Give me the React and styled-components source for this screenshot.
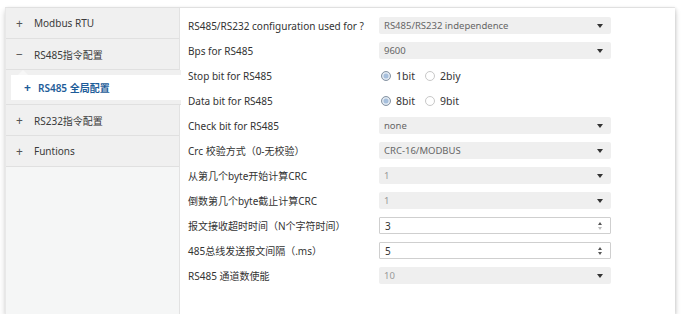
import React from "react"
import styled, { createGlobalStyle } from "styled-components"

const GlobalStyle = createGlobalStyle`
  html, body {
    margin: 0;
    padding: 0;
    background: #ffffff;
  }
  body {
    font-family: "Noto Sans", "Noto Sans CJK SC", sans-serif;
  }
`

const Card = styled.div`
  margin: 8px 0 0 5px;
  width: 670px;
  height: 306px;
  display: flex;
  background: #fff;
  box-sizing: border-box;
  box-shadow: 0 3px 6px rgba(0, 0, 0, 0.18), 0 -1px 0 #e6e6e6, 1px 0 3px rgba(0, 0, 0, 0.1);
`

const Sidebar = styled.div`
  width: 175px;
  flex: none;
  background: #f5f6f6;
  border-right: 1px solid #e2e2e2;
  border-left: 1px solid #e8e8e8;
  box-sizing: border-box;
  display: flex;
  flex-direction: column;
`

const NavItem = styled.div`
  height: 31px;
  display: flex;
  align-items: center;
  padding-left: 10px;
  background: #f0f0f0;
  border-bottom: 1px solid #e0e0e0;
  box-sizing: border-box;
  font-size: 10px;
  color: #3a3a3a;
`

const Sign = styled.span`
  width: 18px;
  font-size: 12px;
  color: #555;
`

const SubList = styled.div`
  padding: 5px 0 4px 5px;
  background: #f0f0f0;
  border-bottom: 1px solid #e0e0e0;
  margin-right: -2px;
`

const SubItem = styled.div`
  position: relative;
  height: 25px;
  display: flex;
  align-items: center;
  padding-left: 13px;
  background: #fff;
  font-size: 10px;
  font-weight: 600;
  color: #1d5c99;

  &::before {
    content: "";
    position: absolute;
    left: 7px;
    top: -5px;
    border-left: 5px solid transparent;
    border-right: 5px solid transparent;
    border-bottom: 5px solid #f7f7f7;
  }
`

const SubSign = styled.span`
  width: 14px;
  font-size: 12px;
  font-weight: 700;
  color: #1d5c99;
`

const Form = styled.div`
  flex: 1;
  padding: 5px 0 0 8px;
  display: grid;
  grid-template-columns: 191px 232px;
  grid-auto-rows: 25px;
  align-content: start;
`

const Label = styled.div`
  display: flex;
  align-items: center;
  font-size: 10px;
  color: #333;
  white-space: nowrap;
`

const Cell = styled.div`
  display: flex;
  align-items: center;
`

const Select = styled.div`
  width: 100%;
  height: 17px;
  display: flex;
  align-items: center;
  justify-content: space-between;
  padding: 0 8px 0 5px;
  box-sizing: border-box;
  background: #efefef;
  border-radius: 2px;
  font-size: 9.5px;
  color: ${p => (p.$muted ? "#999" : "#666")};
`

const Caret = styled.span`
  width: 0;
  height: 0;
  border-left: 3.5px solid transparent;
  border-right: 3.5px solid transparent;
  border-top: 4px solid #333;
`

const NumberBox = styled.div`
  width: 100%;
  height: 17px;
  display: flex;
  align-items: center;
  justify-content: space-between;
  padding: 0 8px 0 5px;
  box-sizing: border-box;
  background: #fff;
  border: 1px solid #cfcfcf;
  border-radius: 1px;
  font-size: 10px;
  color: #333;
`

const Spinner = styled.span`
  display: flex;
  flex-direction: column;
  gap: 2px;

  span {
    width: 0;
    height: 0;
    border-left: 2.5px solid transparent;
    border-right: 2.5px solid transparent;
  }
  span:first-child {
    border-bottom: 3px solid #555;
  }
  span:last-child {
    border-top: 3px solid ${p => (p.$dim ? "#bbb" : "#555")};
  }
`

const RadioGroup = styled.div`
  display: flex;
  align-items: center;
  gap: 10px;
  padding-left: 2px;
`

const RadioOption = styled.label`
  display: flex;
  align-items: center;
  gap: 5px;
  font-size: 10.5px;
  color: #333;
`

const Dot = styled.span`
  width: 10px;
  height: 10px;
  border-radius: 50%;
  box-sizing: border-box;
  border: 1px solid ${p => (p.$on ? "#8a96a3" : "#c8c8c8")};
  background: ${p => (p.$on ? "#a6bfdc" : "#fff")};
  box-shadow: ${p => (p.$on ? "inset 0 0 0 1.5px #e4ebf3" : "none")};
`

const nav = [
  { sign: "+", label: "Modbus RTU" },
  { sign: "−", label: "RS485指令配置", open: true },
  { sign: "+", label: "RS232指令配置" },
  { sign: "+", label: "Funtions" },
]

const rows = [
  { label: "RS485/RS232 configuration used for ?", type: "select", value: "RS485/RS232 independence" },
  { label: "Bps for RS485", type: "select", value: "9600" },
  { label: "Stop bit for RS485", type: "radio", options: ["1bit", "2biy"] },
  { label: "Data bit for RS485", type: "radio", options: ["8bit", "9bit"] },
  { label: "Check bit for RS485", type: "select", value: "none" },
  { label: "Crc 校验方式（0-无校验）", type: "select", value: "CRC-16/MODBUS" },
  { label: "从第几个byte开始计算CRC", type: "select", value: "1", muted: true },
  { label: "倒数第几个byte截止计算CRC", type: "select", value: "1", muted: true },
  { label: "报文接收超时时间（N个字符时间）", type: "number", value: "3", dim: true },
  { label: "485总线发送报文间隔（.ms）", type: "number", value: "5" },
  { label: "RS485 通道数使能", type: "select", value: "10", muted: true },
]

const Control = ({ row }) => {
  if (row.type === "radio") {
    return (
      <RadioGroup>
        {row.options.map((o, i) => (
          <RadioOption key={o}>
            <Dot $on={i === 0} />
            {o}
          </RadioOption>
        ))}
      </RadioGroup>
    )
  }
  if (row.type === "number") {
    return (
      <NumberBox>
        {row.value}
        <Spinner $dim={row.dim}>
          <span />
          <span />
        </Spinner>
      </NumberBox>
    )
  }
  return (
    <Select $muted={row.muted}>
      {row.value}
      <Caret />
    </Select>
  )
}

const App = () => {
  return (
    <>
      <GlobalStyle />
      <Card>
        <Sidebar>
          {nav.map(item => (
            <React.Fragment key={item.label}>
              <NavItem>
                <Sign>{item.sign}</Sign>
                {item.label}
              </NavItem>
              {item.open && (
                <SubList>
                  <SubItem>
                    <SubSign>+</SubSign>
                    RS485 全局配置
                  </SubItem>
                </SubList>
              )}
            </React.Fragment>
          ))}
        </Sidebar>
        <Form>
          {rows.map(row => (
            <React.Fragment key={row.label}>
              <Label>{row.label}</Label>
              <Cell>
                <Control row={row} />
              </Cell>
            </React.Fragment>
          ))}
        </Form>
      </Card>
    </>
  )
}

export default App
